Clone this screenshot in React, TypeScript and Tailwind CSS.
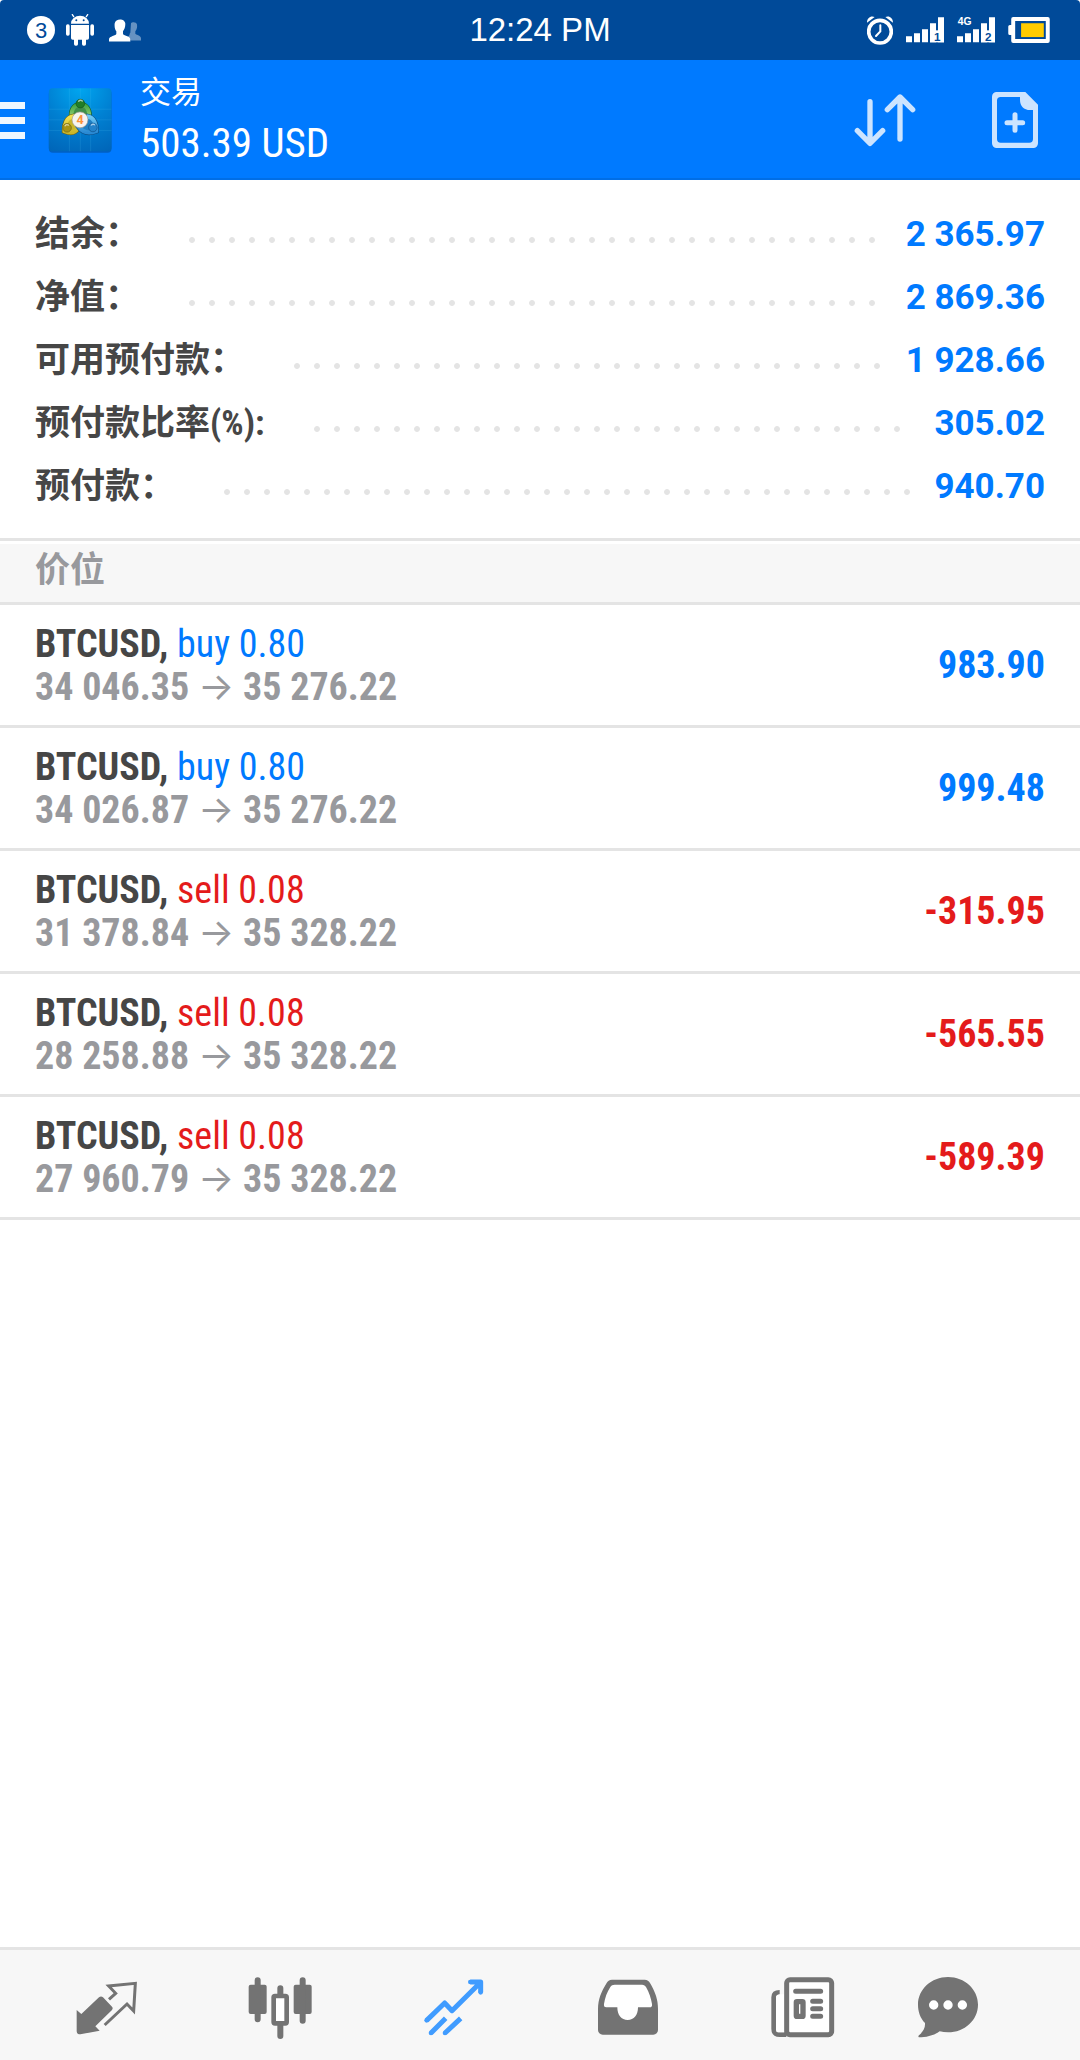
import type { ReactNode } from "react";

interface SummaryRow {
  label: string;
  value: string;
}

interface Position {
  id: number;
  symbol: string;
  side: "buy" | "sell";
  volume: string;
  open: string;
  current: string;
  profit: string;
}

const summary: SummaryRow[] = [
  { label: "结余：", value: "2 365.97" },
  { label: "净值：", value: "2 869.36" },
  { label: "可用预付款：", value: "1 928.66" },
  { label: "预付款比率(%):", value: "305.02" },
  { label: "预付款：", value: "940.70" },
];

const positions: Position[] = [
  { id: 1, symbol: "BTCUSD", side: "buy", volume: "0.80", open: "34 046.35", current: "35 276.22", profit: "983.90" },
  { id: 2, symbol: "BTCUSD", side: "buy", volume: "0.80", open: "34 026.87", current: "35 276.22", profit: "999.48" },
  { id: 3, symbol: "BTCUSD", side: "sell", volume: "0.08", open: "31 378.84", current: "35 328.22", profit: "-315.95" },
  { id: 4, symbol: "BTCUSD", side: "sell", volume: "0.08", open: "28 258.88", current: "35 328.22", profit: "-565.55" },
  { id: 5, symbol: "BTCUSD", side: "sell", volume: "0.08", open: "27 960.79", current: "35 328.22", profit: "-589.39" },
];

export default function App() {
  return (
    <div className="flex min-h-screen flex-col bg-white font-['Roboto','Noto_Sans_CJK_SC',sans-serif] text-[#464646]">
      <StatusBar />
      <Header />
      <main className="flex-1">
        <dl className="border-b-[3px] border-[#e4e4e4] px-[35px] pt-[23px] pb-5">
          {summary.map((row) => (
            <div key={row.label} className="flex h-[63px] items-center text-[35px] leading-[63px]">
              <dt className="font-['Roboto_Condensed','Noto_Sans_CJK_SC',sans-serif] font-bold">{row.label}</dt>
              <span className="mt-[10px] mr-[23px] ml-[49px] h-[6px] flex-1 bg-[radial-gradient(circle_at_3px_3px,#e4e4e4_2.5px,transparent_3.3px)] bg-[length:20px_6px] bg-repeat-x" />
              <dd className="font-bold text-[#007aff]">{row.value}</dd>
            </div>
          ))}
        </dl>

        <h2 className="mt-[3px] h-[61px] border-b-[3px] border-[#e4e4e4] bg-[#f7f7f7] px-[35px] text-[35px] leading-[53px] font-bold text-[#98999d]">
          价位
        </h2>

        <ul className="font-['Roboto_Condensed','Noto_Sans_CJK_SC',sans-serif] text-[38px] leading-[43px]">
          {positions.map((p) => (
            <PositionRow key={p.id} position={p} />
          ))}
        </ul>
      </main>
      <TabBar />
    </div>
  );
}

function PositionRow({ position: p }: { position: Position }) {
  const color = p.side === "buy" ? "text-[#007aff]" : "text-[#e41b1b]";
  return (
    <li className="flex h-[123px] items-center justify-between border-b-[3px] border-[#e4e4e4] px-[35px] pt-px">
      <div>
        <p>
          <span className="font-bold">{p.symbol},</span>{" "}
          <span className={color}>
            {p.side} {p.volume}
          </span>
        </p>
        <p className="font-bold text-[#98999d]">
          {p.open} <span className="font-['Inter',sans-serif] leading-none font-normal">→</span> {p.current}
        </p>
      </div>
      <span className={`font-bold ${color}`}>{p.profit}</span>
    </li>
  );
}

function StatusBar() {
  return (
    <div className="grid h-[60px] grid-cols-[1fr_auto_1fr] items-center rounded-t-[4px] bg-[#004a99] px-[27px] font-['Liberation_Sans',sans-serif] text-white">
      <div className="flex items-center gap-[11px]">
        <span className="flex size-7 items-center justify-center rounded-full bg-white text-[22px] text-[#004a99]">3</span>
        <svg viewBox="0 0 84 96" className="h-8 w-7" fill="currentColor" aria-hidden="true">
          <path d="M15 29a27 24 0 0 1 54 0z" />
          <path d="M23 8l-4-6M61 8l4-6" stroke="currentColor" strokeWidth="4" strokeLinecap="round" />
          <circle cx="31" cy="19" r="3" fill="#004a99" />
          <circle cx="53" cy="19" r="3" fill="#004a99" />
          <path d="M15 33h54v39a5 5 0 0 1-5 5H20a5 5 0 0 1-5-5z" />
          <rect y="31" width="11" height="34" rx="5" />
          <rect x="73" y="31" width="11" height="34" rx="5" />
          <rect x="24" y="70" width="12" height="25" rx="5" />
          <rect x="48" y="70" width="12" height="25" rx="5" />
        </svg>
        <svg viewBox="0 0 96 68" className="ml-1 h-[23px] w-8" fill="currentColor" aria-hidden="true">
          <path
            opacity=".4"
            d="M66 12c3-4 16-5 18 4 1 8 0 14-5 20v8c0 3 17 5 17 13v7H66l-9-11c4-3 5-5 5-9l2-3z"
          />
          <path d="M17 13C19-3 48-4 49 14c0 11-3 17-7 22v8c0 6 22 6 22 17v6H0v-6c0-11 22-10 22-17v-8c-4-4-6-13-5-23z" />
        </svg>
      </div>
      <time className="text-[33px] leading-[60px]">12:24 PM</time>
      <div className="flex items-center justify-end gap-[13px] pr-[3px]">
        <svg viewBox="0 0 78 87" className="h-[29px] w-[26px]" fill="none" stroke="currentColor" aria-hidden="true">
          <path d="M0 20C0 5 12-2 23 3zM78 20C78 5 66-2 55 3z" fill="currentColor" stroke="none" />
          <circle cx="39" cy="47" r="37" fill="#004a99" stroke="none" />
          <circle cx="39" cy="47" r="34" strokeWidth="11" />
          <path d="M40 28v18L27 60" strokeWidth="6" strokeLinecap="round" />
        </svg>
        <Signal sim="1" />
        <Signal sim="2" network="4G" />
        <svg viewBox="0 0 126 79" className="h-[26px] w-[42px]" aria-hidden="true">
          <path
            fill="currentColor"
            fillRule="evenodd"
            d="M15 0h105a6 6 0 0 1 6 6v67a6 6 0 0 1-6 6H15a6 6 0 0 1-6-6V55H5a5 5 0 0 1-5-5V29a5 5 0 0 1 5-5h4V6a6 6 0 0 1 6-6zm6 12v55h93V12z"
          />
          <rect x="39" y="19" width="69" height="42" fill="#ffcc00" />
        </svg>
      </div>
    </div>
  );
}

function Signal({ sim, network }: { sim: string; network?: string }) {
  return (
    <svg viewBox="0 0 114 78" className="h-[26px] w-[38px] overflow-visible font-bold" fill="currentColor" aria-hidden="true">
      <path d="M0 58h18v18H0zM24 49h18v27H24zM48 37h18v39H48zM72 19h18v57H72zM96 1h18v75H96z" />
      <path d="M72 40h42v36H72z" />
      <text x="94" y="71" fontSize="35" textAnchor="middle" fill="#004a99">
        {sim}
      </text>
      {network && (
        <text x="2" y="25" fontSize="31">
          {network}
        </text>
      )}
    </svg>
  );
}

function Header() {
  return (
    <header className="flex h-[120px] items-center border-b-2 border-[#006ee6] bg-[#007aff] pt-[2px] pr-[42px] text-white">
      <button type="button" aria-label="Menu" className="flex w-[25px] flex-col gap-2">
        <span className="h-[7px] bg-[#f0f7ff]" />
        <span className="h-[7px] bg-[#f0f7ff]" />
        <span className="h-[7px] bg-[#f0f7ff]" />
      </button>
      <Logo />
      <div className="ml-7 flex-1">
        <h1 className="text-[31px] leading-[46px] font-normal">交易</h1>
        <p className="font-['Roboto_Condensed',sans-serif] text-[41px] leading-[54px]">503.39 USD</p>
      </div>
      <button type="button" aria-label="Sort">
        <svg viewBox="0 0 186 162" className="h-[54px] w-[62px]" fill="none" stroke="#cce4ff" strokeWidth="16" strokeLinecap="round" strokeLinejoin="round">
          <path d="M48 26v122M10 113l38 38 38-38M138 138V14M100 50l38-38 38 38" />
        </svg>
      </button>
      <button type="button" aria-label="New order" className="ml-[76px]">
        <svg viewBox="0 0 138 168" className="h-14 w-[46px]" fill="#cce4ff">
          <path
            fillRule="evenodd"
            d="M14 0h86l38 38v116a14 14 0 0 1-14 14H14a14 14 0 0 1-14-14V14A14 14 0 0 1 14 0zm12 15a11 11 0 0 0-11 11v115a11 11 0 0 0 11 11h86a11 11 0 0 0 11-11V54h-8c-20 0-31-13-31-31v-8z"
          />
          <path d="M69 68v47M45 92h47" stroke="#cce4ff" strokeWidth="15" strokeLinecap="round" />
        </svg>
      </button>
    </header>
  );
}

function Logo() {
  return (
    <svg viewBox="0 0 192 196" className="ml-[23px] h-[65px] w-16" aria-hidden="true">
      <defs>
        <radialGradient id="logo-bg" cx=".5" cy="0" r="1.1">
          <stop offset="0" stopColor="#00a6f0" />
          <stop offset=".5" stopColor="#0080d2" />
          <stop offset="1" stopColor="#0065b8" />
        </radialGradient>
        <linearGradient id="logo-green" x1="0" y1="0" x2="0" y2="1">
          <stop offset="0" stopColor="#3fa544" />
          <stop offset="1" stopColor="#a5d67c" />
        </linearGradient>
        <linearGradient id="logo-yellow" x1="0" y1="0" x2="0" y2="1">
          <stop offset="0" stopColor="#f0e052" />
          <stop offset="1" stopColor="#c9b62a" />
        </linearGradient>
        <linearGradient id="logo-blue" x1="0" y1="0" x2="0" y2="1">
          <stop offset="0" stopColor="#6cc8f5" />
          <stop offset="1" stopColor="#2a8ad4" />
        </linearGradient>
      </defs>
      <rect x="2" y="5" width="189" height="190" rx="12" fill="#0060c4" />
      <rect x="2" y="1" width="189" height="190" rx="11" fill="url(#logo-bg)" />
      <path d="M64 1v190M97 1v190M128 1v190M2 64h189M2 96h189M2 128h189" stroke="#4cc0f5" strokeOpacity=".25" strokeWidth="2" />
      <g fill="none">
        <path d="M72 94c-6-26 6-44 25-44s31 18 25 44z" stroke="#17601f" strokeWidth="16" />
        <path d="M72 94c-6-26 6-44 25-44s31 18 25 44z" fill="#3f8f4a" stroke="url(#logo-green)" strokeWidth="12" />
        <path d="M74 86c-18 4-26 22-25 44 20 8 34 4 42-10z" stroke="#6c6413" strokeWidth="16" />
        <path d="M74 86c-18 4-26 22-25 44 20 8 34 4 42-10z" fill="#c9b72a" stroke="url(#logo-yellow)" strokeWidth="12" />
        <path d="M120 86c18 4 26 22 25 44-22 8-42 4-54-14z" stroke="#0b4f88" strokeWidth="16" />
        <path d="M120 86c18 4 26 22 25 44-22 8-42 4-54-14z" fill="#1f7fc4" stroke="url(#logo-blue)" strokeWidth="12" />
      </g>
      <circle cx="97" cy="47" r="13" fill="#217d28" stroke="#14531b" strokeWidth="2" />
      <circle cx="57" cy="120" r="13" fill="#a89416" stroke="#6c6413" strokeWidth="2" />
      <circle cx="135" cy="119" r="13" fill="#2382ca" stroke="#0b4f88" strokeWidth="2" />
      <path d="M92 40c3-4 8-4 11-1M51 114c3-4 7-4 10-2M130 112c3-3 7-3 10-1" stroke="#fff" strokeOpacity=".6" strokeWidth="4" strokeLinecap="round" fill="none" />
      <circle cx="96" cy="96" r="24" fill="#f6f4f1" stroke="#a09a92" strokeWidth="2" />
      <text x="96" y="109" fontSize="38" fontWeight="700" textAnchor="middle" fill="#fb923c">
        4
      </text>
    </svg>
  );
}

function TabBar() {
  return (
    <nav className="grid h-[113px] grid-cols-[repeat(5,3fr)_2fr] border-t-[3px] border-[#e4e4e4] bg-[#f7f7f7] pt-1.5 pr-[74px] pl-[18px] text-[#737373]">
      <Tab label="Quotes">
        <path d="M5 99l14 12 53-50q6-5 12 0l27 28q4 5 0 10l-50 49 13 13-58 11Q5 172 5 163z" />
        <path d="M102 67l20-18-21-22 80-8-5 83-20-21-67 63" fill="none" stroke="currentColor" strokeWidth="9" />
      </Tab>
      <Tab label="Charts">
        <rect x="-4" y="23" width="54" height="88" rx="6" />
        <rect x="131" y="23" width="54" height="88" rx="6" />
        <path d="M23 10v117M158 10v121M91 34v24M91 140v37" stroke="currentColor" strokeWidth="18" strokeLinecap="round" />
        <rect x="71" y="57" width="39" height="82" rx="4" fill="#fff" stroke="currentColor" strokeWidth="14" />
      </Tab>
      <Tab label="Trade" active>
        <path
          d="M8 130l54-52 22 23 83-82M139 15h31v31M21 168l44-44M63 168l47-44"
          fill="none"
          stroke="currentColor"
          strokeWidth="15"
          strokeLinejoin="round"
        />
        <circle cx="8" cy="130" r="7" />
        <circle cx="21" cy="168" r="7" />
        <circle cx="63" cy="168" r="7" />
        <circle cx="139" cy="15" r="7" />
        <circle cx="170" cy="46" r="7" />
      </Tab>
      <Tab label="History">
        <path d="M42 8h98c8 0 13 4 16 10 16 27 24 49 24 78v63a14 14 0 0 1-14 14H14a14 14 0 0 1-14-14V96c0-29 10-52 26-78 3-6 8-10 16-10z" />
        <path
          fill="#fff"
          d="M50 23h82c6 0 10 3 12 7 10 17 15 34 18 51 1 7-1 10-8 10h-34c0 24-12 38-31 38s-31-14-31-38H25c-6 0-8-4-7-10 3-19 9-35 19-51 3-5 7-7 13-7z"
        />
      </Tab>
      <Tab label="News">
        <path d="M20 46c-12 0-18 5-18 15v94c0 12 6 18 18 18h20" fill="none" stroke="currentColor" strokeWidth="14" />
        <path d="M20 52h14v114H15q-6 0-6-8V63q0-11 11-11z" fill="#fff" />
        <rect x="41" y="8" width="135" height="165" rx="10" fill="#fff" stroke="currentColor" strokeWidth="15" />
        <path d="M68 43h75M119 73h24M119 95h24M119 118h24" stroke="currentColor" strokeWidth="15" strokeLinecap="round" />
        <rect x="70" y="74" width="20" height="44" rx="2" fill="#fff" stroke="currentColor" strokeWidth="16" strokeLinejoin="round" />
      </Tab>
      <Tab label="Messages">
        <path d="M90 0c50 0 90 37 90 83s-40 83-90 83c-9 0-17-1-25-3-17 13-42 18-62 18-3-1-2-4 0-6 13-12 19-22 18-37C7 123 0 104 0 83 0 37 40 0 90 0z" />
        <path d="M47 84h.1M90 84h.1M133 84h.1" stroke="#fff" strokeWidth="28" strokeLinecap="round" />
      </Tab>
    </nav>
  );
}

function Tab({ label, active, children }: { label: string; active?: boolean; children: ReactNode }) {
  return (
    <button
      type="button"
      aria-label={label}
      aria-current={active ? "page" : undefined}
      className={`flex items-center justify-center ${active ? "text-[#409cff]" : ""}`}
    >
      <svg viewBox="0 0 180 186" className="h-[62px] w-[60px] overflow-visible" fill="currentColor" aria-hidden="true">
        {children}
      </svg>
    </button>
  );
}
